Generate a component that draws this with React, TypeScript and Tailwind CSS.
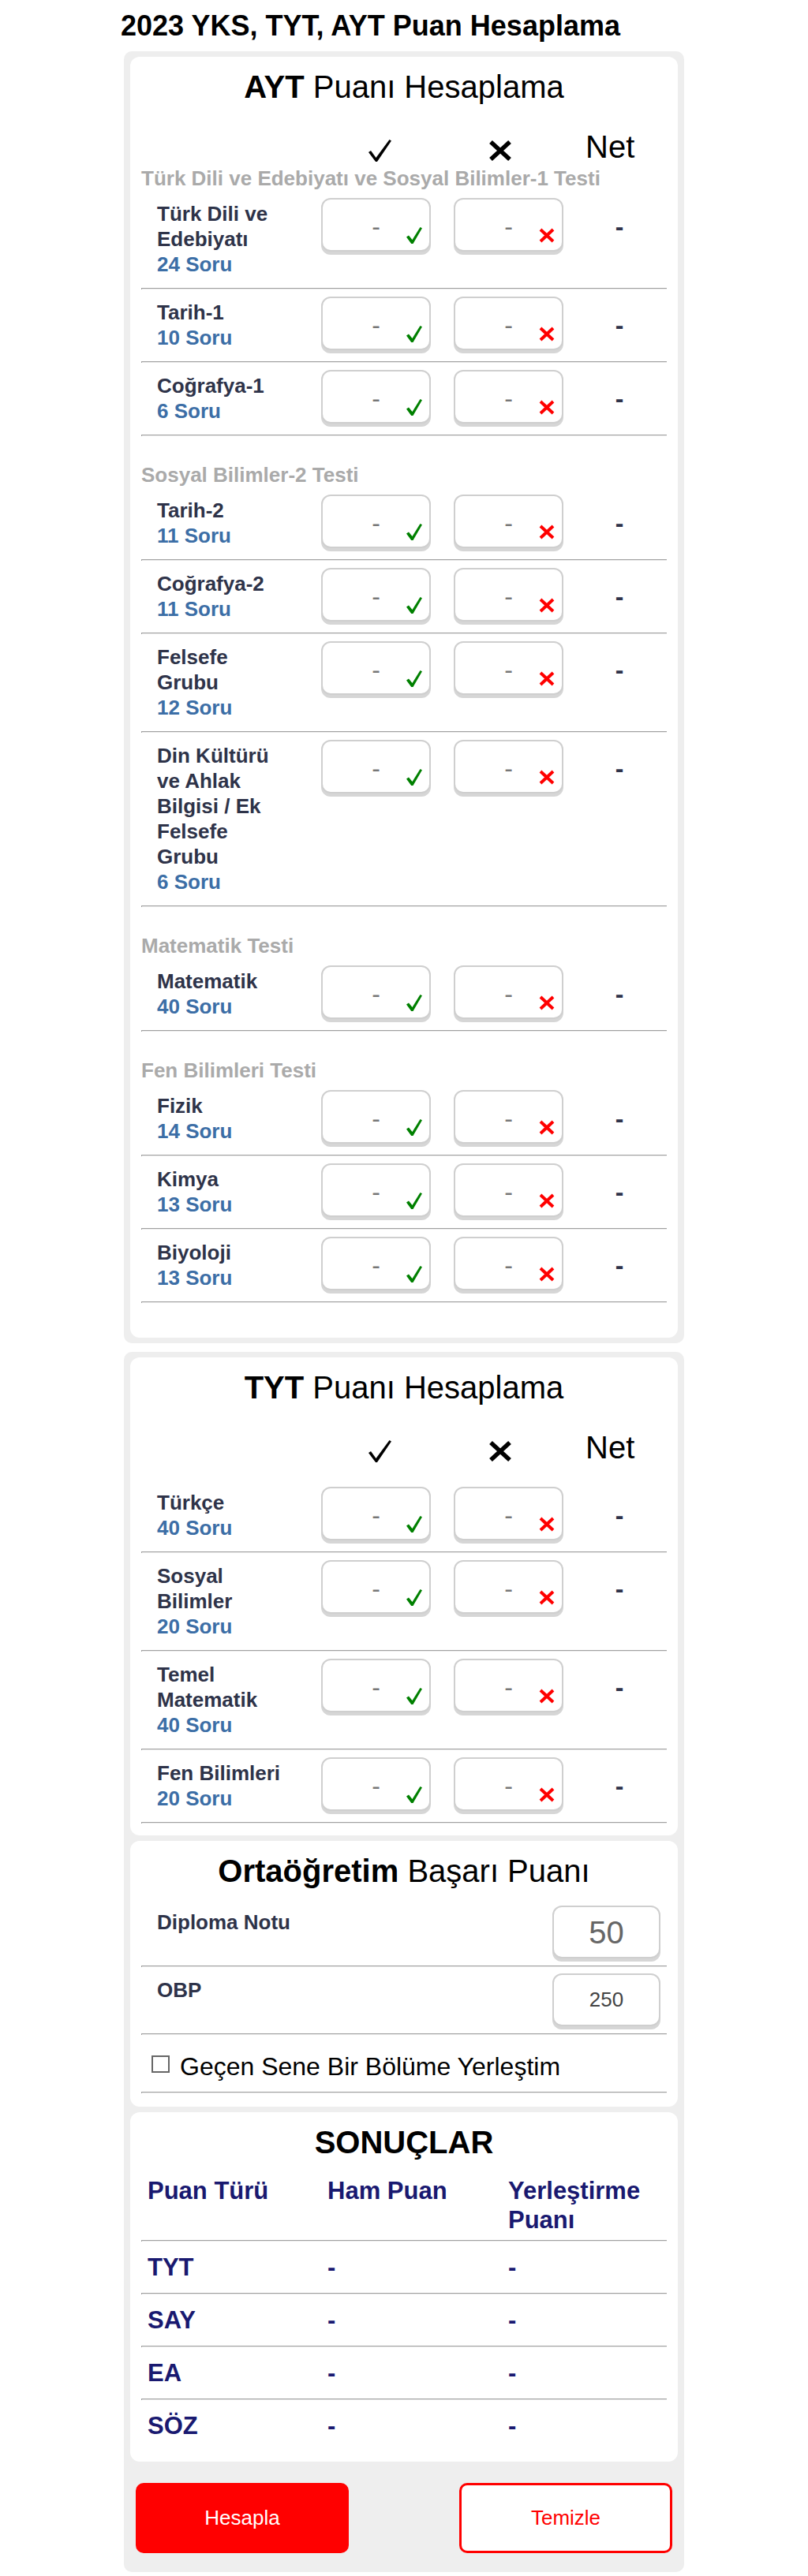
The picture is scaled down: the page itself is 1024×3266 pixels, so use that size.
import React from "react";

type Subject = { name: string; soru: number };
type Section = { title: string; subjects: Subject[] };

const aytSections: Section[] = [
  {
    title: "Türk Dili ve Edebiyatı ve Sosyal Bilimler-1 Testi",
    subjects: [
      { name: "Türk Dili ve Edebiyatı", soru: 24 },
      { name: "Tarih-1", soru: 10 },
      { name: "Coğrafya-1", soru: 6 },
    ],
  },
  {
    title: "Sosyal Bilimler-2 Testi",
    subjects: [
      { name: "Tarih-2", soru: 11 },
      { name: "Coğrafya-2", soru: 11 },
      { name: "Felsefe Grubu", soru: 12 },
      { name: "Din Kültürü ve Ahlak Bilgisi / Ek Felsefe Grubu", soru: 6 },
    ],
  },
  { title: "Matematik Testi", subjects: [{ name: "Matematik", soru: 40 }] },
  {
    title: "Fen Bilimleri Testi",
    subjects: [
      { name: "Fizik", soru: 14 },
      { name: "Kimya", soru: 13 },
      { name: "Biyoloji", soru: 13 },
    ],
  },
];

const tytSubjects: Subject[] = [
  { name: "Türkçe", soru: 40 },
  { name: "Sosyal Bilimler", soru: 20 },
  { name: "Temel Matematik", soru: 40 },
  { name: "Fen Bilimleri", soru: 20 },
];

const results = ["TYT", "SAY", "EA", "SÖZ"];

function Divider() {
  return <div className="h-[2px] border-l border-t border-[#a0a0a0] bg-[#ebebeb]" />;
}

function ScoreBox({ mark }: { mark: "ok" | "bad" }) {
  return (
    <div className="relative h-[68px] w-[139px] shrink-0 rounded-[12px] border-2 border-[#cfcfcf] bg-white shadow-[0_4px_0_#d6d6d6]">
      <div className="pt-[16px] text-center text-[32px] leading-[37px] text-[#777]">-</div>
      {mark === "ok" ? (
        <svg width="20" height="21" viewBox="0 0 20 21" className="absolute left-[106px] top-[35px]">
          <polygon points="0,12.5 3,10.5 7.5,16 17.5,0 20,1.2 8.5,21 6.2,21" fill="#008000" />
        </svg>
      ) : (
        <svg width="20" height="19" viewBox="0 0 20 19" className="absolute left-[106px] top-[36px]">
          <path d="M2 2 L18 17 M18 2 L2 17" stroke="#ff0000" strokeWidth="4" />
        </svg>
      )}
    </div>
  );
}

function SubjectRow({ s }: { s: Subject }) {
  return (
    <div>
      <div className="flex items-start pb-[14px] pt-[9px]">
        <div className="w-[228px] shrink-0 pl-[20px] pr-[43px] pt-[4px] text-[26px] font-bold leading-[32px]">
          <div className="text-[#2e3349]">{s.name}</div>
          <div className="text-[#3c6ea6]">{s.soru} Soru</div>
        </div>
        <ScoreBox mark="ok" />
        <div className="ml-[29px]">
          <ScoreBox mark="bad" />
        </div>
        <div className="flex-1 pl-[11px] pt-[18px] text-center text-[32px] font-bold leading-[37px] text-[#2e3349]">
          -
        </div>
      </div>
      <Divider />
    </div>
  );
}

function ColumnHeads() {
  return (
    <div className="flex h-[76px] items-start pt-[30px]">
      <div className="w-[288px] shrink-0" />
      <svg width="29" height="28" viewBox="0 0 29 28" className="mt-[14px] shrink-0">
        <polygon points="0,16 3,14 9.5,23 26.5,0 29,1.5 11,28 9,28" fill="#000" />
      </svg>
      <div className="w-[123px] shrink-0" />
      <svg width="30" height="26" viewBox="0 0 30 26" className="mt-[15px] shrink-0">
        <path d="M3 2 L27 24 M27 2 L3 24" stroke="#000" strokeWidth="5.5" />
      </svg>
      <div className="w-[93px] shrink-0" />
      <div className="text-[40px] leading-[46px]">Net</div>
    </div>
  );
}

function CardTitle({ bold, rest }: { bold: string; rest?: string }) {
  return (
    <h2 className="pt-[15px] text-center text-[40px] leading-[46px] text-black">
      <b>{bold}</b>
      {rest ? ` ${rest}` : ""}
    </h2>
  );
}

function ValueRow({ label, value, big, first }: { label: string; value: string; big?: boolean; first?: boolean }) {
  return (
    <div>
      <div className={`flex items-start justify-between pb-[9px] pt-[8px] ${first ? "mt-[13px]" : ""}`}>
        <div className="pl-[20px] pt-[5px] text-[26px] font-bold leading-[32px] text-[#2e3349]">{label}</div>
        <div className="mr-[8px] flex h-[67px] w-[137px] items-center justify-center rounded-[12px] border-2 border-[#cfcfcf] bg-white shadow-[0_4px_0_#d6d6d6]">
          <span className={big ? "text-[40px] text-[#666]" : "text-[26px] text-[#444]"}>{value}</span>
        </div>
      </div>
      <Divider />
    </div>
  );
}

export default function App() {
  return (
    <div className="min-h-screen bg-white font-['Liberation_Sans',Arial,Helvetica,sans-serif] text-black">
      <div className="mx-auto w-[710px] pt-[12px]">
        <h1 className="-ml-[4px] mb-[12px] text-[36px] font-bold leading-[41px]">2023 YKS, TYT, AYT Puan Hesaplama</h1>

        <div className="rounded-[10px] bg-[#eeeeee] px-[8px] py-[7px]">
          <div className="rounded-[12px] bg-white px-[14px] pb-[44px]">
            <CardTitle bold="AYT" rest="Puanı Hesaplama" />
            <ColumnHeads />
            {aytSections.map((sec, i) => (
              <div key={sec.title}>
                <div className={`${i === 0 ? "mt-[2px]" : "mt-[34px]"} text-[26px] font-bold leading-[31px] text-[#aaaaaa]`}>
                  {sec.title}
                </div>
                {sec.subjects.map((s) => (
                  <SubjectRow key={s.name} s={s} />
                ))}
              </div>
            ))}
          </div>
        </div>

        <div className="mt-[11px] rounded-[10px] bg-[#eeeeee] px-[8px] py-[7px]">
          <div className="rounded-[12px] bg-white px-[14px] pb-[15px]">
            <CardTitle bold="TYT" rest="Puanı Hesaplama" />
            <ColumnHeads />
            <div className="mt-[18px]">
              {tytSubjects.map((s) => (
                <SubjectRow key={s.name} s={s} />
              ))}
            </div>
          </div>

          <div className="mt-[7px] rounded-[12px] bg-white px-[14px] pb-[17px]">
            <CardTitle bold="Ortaöğretim" rest="Başarı Puanı" />
            <ValueRow label="Diploma Notu" value="50" big first />
            <ValueRow label="OBP" value="250" />
            <div className="flex items-start pb-[13px] pl-[13px] pt-[22px]">
              <span className="mt-[4px] h-[22px] w-[23px] shrink-0 border-2 border-[#666] bg-white" />
              <span className="ml-[13px] text-[32px] leading-[37px]">Geçen Sene Bir Bölüme Yerleştim</span>
            </div>
            <Divider />
          </div>

          <div className="mt-[7px] rounded-[12px] bg-white px-[14px] pb-[13px]">
            <CardTitle bold="SONUÇLAR" />
            <div className="flex pb-[7px] pt-[20px] text-[31px] font-bold leading-[37px] text-[#191970]">
              <div className="w-[228px] shrink-0 pl-[8px]">Puan Türü</div>
              <div className="w-[229px] shrink-0 pl-[8px]">Ham Puan</div>
              <div className="flex-1 pl-[8px]">Yerleştirme Puanı</div>
            </div>
            <Divider />
            {results.map((r, i) => (
              <div key={r}>
                <div className="flex py-[14px] text-[31px] font-bold leading-[37px] text-[#191970]">
                  <div className="w-[228px] shrink-0 pl-[8px]">{r}</div>
                  <div className="w-[229px] shrink-0 pl-[8px]">-</div>
                  <div className="flex-1 pl-[8px]">-</div>
                </div>
                {i < results.length - 1 && <Divider />}
              </div>
            ))}
          </div>

          <div className="mb-[17px] mt-[27px] flex justify-between px-[7px]">
            <button className="h-[89px] w-[270px] rounded-[10px] bg-[#ff0000] text-[26px] text-white">Hesapla</button>
            <button className="h-[89px] w-[270px] rounded-[10px] border-[3px] border-[#ff0000] bg-white text-[26px] text-[#ff0000]">
              Temizle
            </button>
          </div>
        </div>
      </div>
    </div>
  );
}
